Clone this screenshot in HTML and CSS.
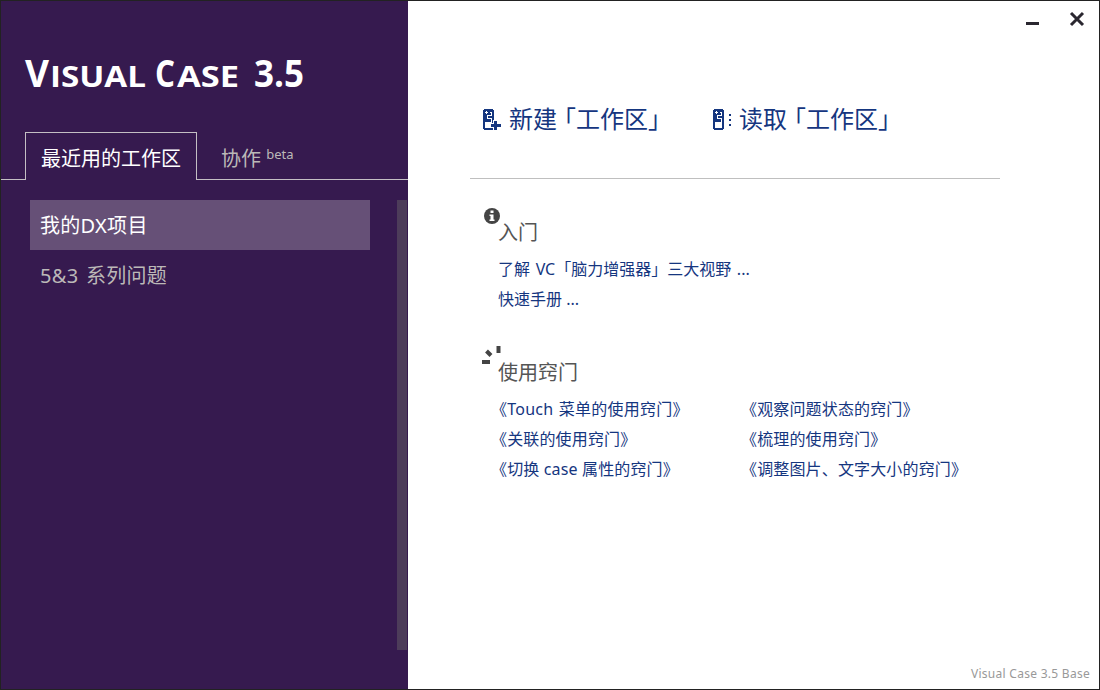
FILE: index.html
```html
<!DOCTYPE html>
<html lang="zh-CN">

<head>
    <meta charset="utf-8">
    <title>Visual Case 3.5</title>
    <link rel="stylesheet" href="styles.css">
</head>

<body>
    <div class="window">
        <aside class="sidebar">
            <h1 class="logo">
                <svg width="300" height="60" viewBox="-5 -10 300 60">
                    <text class="big" x="0" y="33" textLength="24" lengthAdjust="spacingAndGlyphs">V</text>
                    <text class="small" x="25" y="33" textLength="96" lengthAdjust="spacingAndGlyphs">ISUAL</text>
                    <text class="big" x="130" y="33" textLength="20" lengthAdjust="spacingAndGlyphs">C</text>
                    <text class="small" x="152" y="33" textLength="62" lengthAdjust="spacingAndGlyphs">ASE</text>
                    <text class="big" x="229" y="33" textLength="50" lengthAdjust="spacingAndGlyphs">3.5</text>
                </svg>
            </h1>
            <nav class="tabs">
                <a class="tab active">最近用的工作区</a>
                <a class="tab">协作 <span class="beta">beta</span></a>
            </nav>
            <div class="recent">
                <ul class="list">
                    <li class="item selected">我的DX项目</li>
                    <li class="item wide">5&amp;3 系列问题</li>
                </ul>
                <div class="scrollbar"></div>
            </div>
        </aside>

        <main class="content">
            <div class="controls">
                <svg width="60" height="16" viewBox="0 0 60 16" fill="none" stroke="#2a2730">
                    <path d="M0 12.500h13" stroke-width="3" />
                    <path d="M45 2l12 12M57 2L45 14" stroke-width="3" />
                </svg>
            </div>

            <div class="actions">
                <a class="action create">
                    <svg width="18" height="21" viewBox="0 0 18 21" shape-rendering="crispEdges">
                        <path d="M1 0h9v1h1v19h-1v1H1v-1H0V1h1z" fill="#15367f" />
                        <path d="M3.500 2v3M2 3.500h3M7 3.500h2M8.500 3v4M4 6.500h5M4.500 6v4M4 9.500h5M8.500 9v5" fill="none" stroke="#fff" />
                        <path d="M2 13h6v6H2z" fill="#fff" />
                        <path d="M10 11h5v3h3v5h-3v2h-5v-2H7v-5h3z" fill="#fff" />
                        <path d="M11 12h3v3h4v3h-4v3h-3v-3H8v-3h3z" fill="#15367f" />
                    </svg>
                    <span>新建<b class="open">「</b>工作区<b class="close">」</b></span>
                </a>
                <a class="action load">
                    <svg width="18" height="21" viewBox="0 0 18 21" shape-rendering="crispEdges">
                        <path d="M1 0h9v1h1v19h-1v1H1v-1H0V1h1z" fill="#15367f" />
                        <path d="M3.500 2v3M2 3.500h3M7 3.500h2M8.500 3v4M4 6.500h5M4.500 6v4M4 9.500h5M8.500 9v5" fill="none" stroke="#fff" />
                        <path d="M2 13h7v6H2z" fill="#fff" />
                        <path d="M16 5h2v2h-2zM16 10h2v2h-2zM16 15h2v2h-2z" fill="#15367f" />
                    </svg>
                    <span>读取<b class="open">「</b>工作区<b class="close">」</b></span>
                </a>
            </div>

            <section class="group">
                <svg class="mark" width="20" height="20" viewBox="0 0 20 20">
                    <circle cx="10" cy="10" r="8" fill="#444" />
                    <path d="M8.500 4.500h3v2.500h-3zM7.500 8.500h4v5h1V15h-5v-1.500h1V10h-1z" fill="#fff" />
                </svg>
                <h2>入门</h2>
                <a class="link intro">了解 VC「脑力增强器」三大视野 ...</a>
                <a class="link">快速手册 ...</a>
            </section>

            <section class="group tips">
                <svg class="mark" width="20" height="20" viewBox="0 0 20 20" stroke="#444" stroke-width="4" fill="none">
                    <path d="M0 16h8" />
                    <path d="M4.500 5l4.500 4.500" />
                    <path d="M16.500 0v7" />
                </svg>
                <h2>使用窍门</h2>
                <div class="columns">
                    <div class="column">
                        <a class="link wide">《Touch 菜单的使用窍门》</a>
                        <a class="link">《关联的使用窍门》</a>
                        <a class="link">《切换 case 属性的窍门》</a>
                    </div>
                    <div class="column">
                        <a class="link">《观察问题状态的窍门》</a>
                        <a class="link">《梳理的使用窍门》</a>
                        <a class="link">《调整图片、文字大小的窍门》</a>
                    </div>
                </div>
            </section>

            <footer class="version">Visual Case 3.5 Base</footer>
        </main>
    </div>
</body>

</html>
```

FILE: styles.css
```css
* {
    box-sizing: border-box;
}

body {
    margin: 0;
    font-family: "Noto Sans", "Noto Sans CJK SC", sans-serif;
}

h1,
h2,
ul {
    margin: 0;
    padding: 0;
    font-weight: normal;
}

svg {
    display: block;
    flex-shrink: 0;
}

.window {
    display: flex;
    width: 1100px;
    height: 690px;
    border: 1px solid #222;
    background-color: #fff;
}

.sidebar {
    width: 407px;
    background-color: #361a4f;
    color: #bcb9b8;
}

.logo {
    height: 131px;
    padding: 43px 0 0 19px;
}

.logo text {
    font-family: "Open Sans", sans-serif;
    font-weight: bold;
    fill: #fff;
}

.big {
    font-size: 37px;
}

.small {
    font-size: 29px;
}

.tabs {
    display: flex;
    height: 48px;
}

.tabs::before {
    content: "";
    width: 24px;
    border-bottom: 1px solid #c4bfc4;
}

.tab {
    flex: 1;
    padding-left: 24px;
    border-bottom: 1px solid #c4bfc4;
    font-size: 20px;
    line-height: 54px;
    white-space: nowrap;
}

.tab.active {
    flex: none;
    width: 172px;
    padding-left: 15px;
    border: 1px solid #c4bfc4;
    border-bottom: none;
    line-height: 52px;
    color: #fff;
}

.beta {
    font-size: 13px;
    line-height: 0;
    vertical-align: 7px;
}

.recent {
    display: flex;
    justify-content: space-between;
    padding: 20px 1px 0 29px;
}

.list {
    width: 340px;
    list-style: none;
}

.item {
    height: 50px;
    padding-left: 10px;
    font-size: 20px;
    line-height: 52px;
    letter-spacing: 0.3px;
}

.item.wide {
    word-spacing: 2px;
}

.item.selected {
    background-color: #665077;
    color: #fff;
}

.scrollbar {
    width: 10px;
    height: 450px;
    background-color: #4d3c5a;
}

.content {
    display: flex;
    flex: 1;
    flex-direction: column;
    color: #555;
}

.controls {
    display: flex;
    justify-content: flex-end;
    height: 80px;
    padding: 10px 13px 0 0;
}

.actions {
    display: flex;
    width: 530px;
    height: 98px;
    margin-left: 62px;
    padding-left: 13px;
    border-bottom: 1px solid #bfbfbf;
}

.action {
    display: flex;
    gap: 8px;
    height: 40px;
    padding-top: 28px;
    color: #15367f;
    font-size: 24px;
    line-height: 20px;
    white-space: nowrap;
}

.create {
    width: 230px;
}

.action b {
    font-weight: normal;
    font-feature-settings: "halt";
}

.open {
    margin-left: 7px;
}

.group {
    display: flex;
    flex-direction: column;
    height: 140px;
    padding: 27px 0 0 90px;
}

.mark {
    margin: 0 0 -5px -16px;
}

.group h2 {
    height: 36px;
    font-size: 20px;
    line-height: 24px;
}

.link {
    display: block;
    height: 30px;
    color: #15367f;
    font-size: 16px;
    line-height: 24px;
    white-space: nowrap;
}

.intro {
    word-spacing: 1.5px;
}

.tips {
    flex: 1;
}

.columns {
    display: flex;
}

.column {
    width: 250px;
}

.column .link {
    margin-left: -7px;
    letter-spacing: 0.15px;
}

.column .wide {
    letter-spacing: 0.25px;
    word-spacing: 1px;
}

.version {
    padding: 0 9px 6px 0;
    color: #999;
    font-size: 12px;
    line-height: 18px;
    letter-spacing: 0.28px;
    text-align: right;
}
```
